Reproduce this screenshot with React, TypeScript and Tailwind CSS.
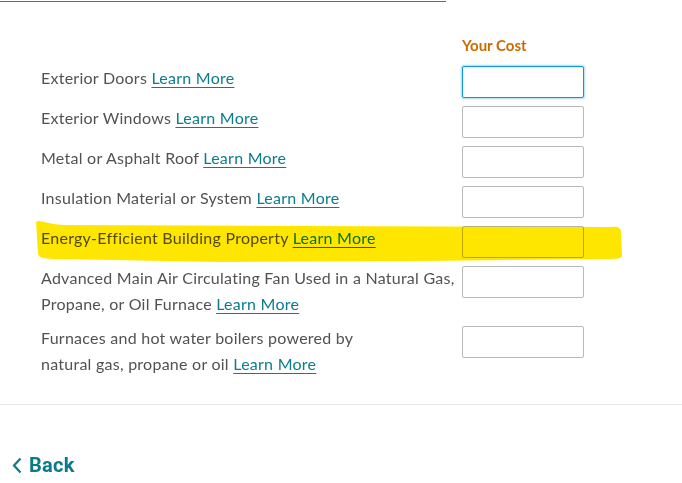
import React from 'react';

const rows: { label: React.ReactNode; focused?: boolean }[] = [
    { label: <>Exterior Doors </>, focused: true },
    { label: <>Exterior Windows </> },
    { label: <>Metal or Asphalt Roof </> },
    { label: <>Insulation Material or System </> },
    { label: <>Energy-Efficient Building Property </> },
    { label: <>Advanced Main Air Circulating Fan Used in a Natural Gas, Propane, or Oil Furnace </> },
    { label: <>Furnaces and hot water boilers powered by<br />natural gas, propane or oil </> },
];

function LearnMore() {
    return <a href="#" className="text-[#0b7d8c] underline underline-offset-[3px] decoration-1">Learn More</a>;
}

export default function App() {
    return (
        <div className="relative bg-white h-[483px] overflow-hidden font-['Lato','Noto_Sans',sans-serif] text-[16px] tracking-[0.25px] text-[#525252]">
            {/* cut-off link underline at the very top */}
            <div className="w-[446px] h-[2px] border-b border-[#1b8a98]" />

            <div className="pl-[41px] pt-[34px]">
                <div className="grid grid-cols-[421px_122px] gap-y-2">
                    <div />
                    <div className="h-[22px] text-[15px] font-bold tracking-normal text-[#cc6a00] leading-[18px]">Your Cost</div>

                    {rows.map((r, i) => (
                        <React.Fragment key={i}>
                            <div className="leading-[26px] -mt-[1px] pb-[1px] pr-1">
                                {r.label}
                                <LearnMore />
                            </div>
                            <input
                                className={
                                    r.focused
                                        ? 'h-8 w-[122px] rounded-[2px] border border-[#0a98d8] bg-white outline-none shadow-[0_0_2px_1px_rgba(10,152,216,0.35)]'
                                        : 'h-8 w-[122px] rounded-[2px] border border-[#b9b9b9] bg-white outline-none'
                                }
                            />
                        </React.Fragment>
                    ))}
                </div>
            </div>

            <div className="mt-[26px] border-t border-[#e6e6e6]" />

            <div className="pl-[12px] pt-[48px] flex items-center gap-[7px] font-['Roboto',sans-serif] font-bold text-[20px] leading-6 text-[#0d7a8a]">
                <svg width="10" height="17" viewBox="0 0 10 17" fill="none">
                    <path d="M8.5 1.5L2 8.5L8.5 15.5" stroke="#0d7a8a" strokeWidth="2.2" />
                </svg>
                <span>Back</span>
            </div>

            {/* marker highlight over the Energy-Efficient row */}
            <svg className="absolute left-0 top-0 mix-blend-multiply pointer-events-none" width="682" height="483">
                <path
                    d="M36 222 C39 219 46 224 62 225 L300 226 L612 227 C618 226 621 228 621 232 L622 256 C622 259 615 259 600 259 L420 261 L220 262 L60 259 C42 259 38 258 38 252 C37 243 37 232 36 222 Z"
                    fill="#ffe600"
                />
            </svg>
        </div>
    );
}
